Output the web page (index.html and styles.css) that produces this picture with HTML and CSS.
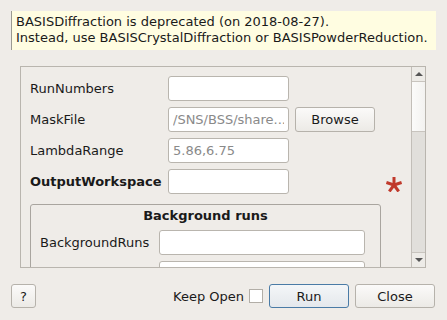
FILE: index.html
```html
<!DOCTYPE html>
<html>
<head>
  <title>BASISDiffraction</title>
  <link rel="stylesheet" href="styles.css">
</head>
<body>
  <div id="dialog">
    <div class="notice">
      BASISDiffraction is deprecated (on 2018-08-27).<br>
      Instead, use BASISCrystalDiffraction or BASISPowderReduction.
    </div>

    <div class="scroll-area">
      <div class="scroll-content">
        <div class="row">
          <label>RunNumbers</label>
          <input type="text" class="field">
        </div>
        <div class="row">
          <label>MaskFile</label>
          <input type="text" class="field" value="/SNS/BSS/share...">
          <button class="btn browse">Browse</button>
        </div>
        <div class="row">
          <label>LambdaRange</label>
          <input type="text" class="field" value="5.86,6.75">
        </div>
        <div class="row">
          <label class="bold">OutputWorkspace</label>
          <input type="text" class="field">
          <svg class="required" width="16" height="15" viewBox="0 0 16 15">
            <g stroke="#c0392b" stroke-width="3" stroke-linecap="butt">
              <line x1="8" y1="8" x2="8" y2="0"/>
              <line x1="8" y1="8" x2="15.6" y2="5.5"/>
              <line x1="8" y1="8" x2="0.4" y2="5.5"/>
              <line x1="8" y1="8" x2="12.7" y2="14.5"/>
              <line x1="8" y1="8" x2="3.3" y2="14.5"/>
            </g>
          </svg>
        </div>

        <div class="group">
          <div class="group-title">Background runs</div>
          <div class="row">
            <label class="short">BackgroundRuns</label>
            <input type="text" class="field wide">
          </div>
          <div class="row">
            <label class="short"></label>
            <input type="text" class="field wide">
          </div>
        </div>
      </div>
      <div class="scrollbar">
        <div class="arrow up"></div>
        <div class="thumb"></div>
        <div class="track"></div>
        <div class="arrow down"></div>
      </div>
    </div>

    <div class="footer">
      <button class="btn help">?</button>
      <span class="keep">Keep Open</span>
      <span class="check"></span>
      <button class="btn run">Run</button>
      <button class="btn close">Close</button>
    </div>
  </div>
</body>
</html>
```

FILE: styles.css
```css
body {
  margin: 0;
  background-color: #efece8;
  font-family: "DejaVu Sans", sans-serif;
  font-size: 13px;
  color: #1a1a1a;
}

#dialog {
  width: 447px;
  height: 320px;
  overflow: hidden;
}

.notice {
  margin: 11px 11px 0 11px;
  height: 39px;
  box-sizing: border-box;
  padding: 3px 4px;
  line-height: 16px;
  background-color: #fffde1;
  border-left: 1px solid #9a9a92;
}

.scroll-area {
  display: flex;
  margin: 16px 21px 0 20px;
  height: 202px;
  box-sizing: border-box;
  border: 1px solid #b9b5ae;
  overflow: hidden;
}

.scroll-content {
  flex: 1;
  padding: 9px 0 0 9px;
  overflow: hidden;
}

.row {
  display: flex;
  align-items: center;
  height: 25px;
  margin-bottom: 6px;
}

.row label {
  width: 138px;
  flex: none;
}

.bold {
  font-weight: bold;
}

.field {
  width: 121px;
  height: 25px;
  box-sizing: border-box;
  border: 1px solid #b9b5ae;
  border-radius: 3px;
  background: #fff;
  padding: 0 4px;
  font-family: "DejaVu Sans", sans-serif;
  font-size: 13px;
  color: #8a8a8a;
  flex: none;
}

.btn {
  box-sizing: border-box;
  height: 25px;
  border: 1px solid #b6b2ab;
  border-radius: 3px;
  background: linear-gradient(#fbfaf9, #eceae6);
  font-family: "DejaVu Sans", sans-serif;
  font-size: 13px;
  color: #1a1a1a;
  padding: 0;
}

.browse {
  width: 80px;
  margin-left: 6px;
}

.required {
  margin-left: auto;
  margin-right: 9px;
  margin-top: 6px;
}

.group {
  margin-top: 10px;
  width: 351px;
  height: 80px;
  box-sizing: border-box;
  border: 1px solid #a9a59f;
  border-radius: 3px;
  padding: 0 0 0 9px;
}

.group-title {
  text-align: center;
  font-weight: bold;
  height: 25px;
  line-height: 22px;
  padding-right: 9px;
}

.short {
  width: 119px !important;
}

.wide {
  width: 206px;
}

.scrollbar {
  width: 13px;
  flex: none;
  display: flex;
  flex-direction: column;
  border-left: 1px solid #c2beb8;
}

.arrow {
  height: 14px;
  background: #edebe7;
  position: relative;
}

.arrow.up {
  border-bottom: 1px solid #c8c4be;
}

.arrow.down {
  border-top: 1px solid #c8c4be;
  margin-top: auto;
}

.arrow::after {
  content: "";
  position: absolute;
  left: 3px;
  top: 5px;
  border-left: 4px solid transparent;
  border-right: 4px solid transparent;
}

.up::after {
  border-bottom: 4px solid #555;
}

.down::after {
  border-top: 4px solid #555;
}

.thumb {
  height: 49px;
  background: linear-gradient(90deg, #fbfbfa, #f3f2f0);
  border-bottom: 1px solid #c8c4be;
}

.track {
  flex: 1;
  background: #e1dfdb;
}

.footer {
  display: flex;
  align-items: center;
  margin: 16px 12px 0 11px;
  height: 24px;
}

.help {
  width: 25px;
  height: 24px;
}

.keep {
  margin-left: auto;
}

.check {
  width: 12px;
  height: 12px;
  border: 1px solid #b2aea7;
  background: #fff;
  margin-left: 5px;
}

.run {
  width: 80px;
  height: 24px;
  margin-left: 6px;
  border-color: #4a7ba6;
  background: linear-gradient(#f4f6f8, #e4e8ec);
}

.close {
  width: 80px;
  height: 24px;
  margin-left: 6px;
}
```
